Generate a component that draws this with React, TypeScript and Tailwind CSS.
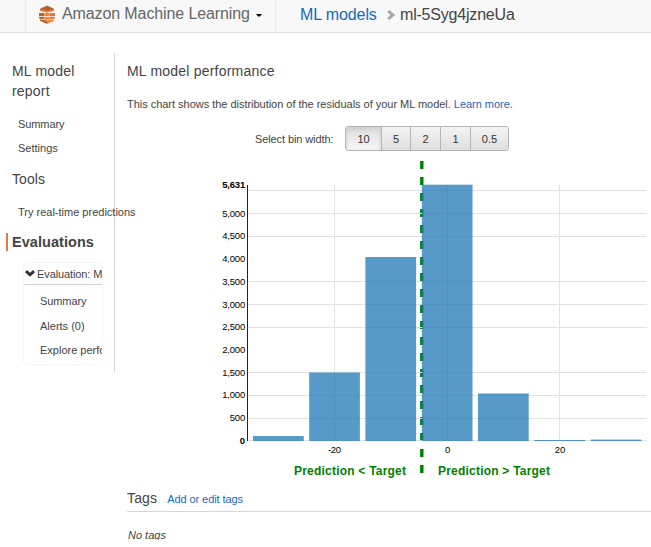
const FONT = "font-['Liberation_Sans',Arial,sans-serif]";

const bars = [
  { x: 253, y: 436 },
  { x: 309.2, y: 372.5 },
  { x: 365.4, y: 257 },
  { x: 421.8, y: 184.7 },
  { x: 478, y: 393.5 },
  { x: 534.4, y: 440 },
  { x: 590.8, y: 439.6 },
];
const gridRows = [190, 213, 236, 281, 304, 327, 372, 395, 418, 440];
const gridColumns = [334, 447, 559];
const yLabels = [
  { text: '5,631', y: 188, bold: true, width: 23 },
  { text: '5,000', y: 217, width: 23 },
  { text: '4,500', y: 239, width: 23 },
  { text: '4,000', y: 262, width: 23 },
  { text: '3,500', y: 285, width: 23 },
  { text: '3,000', y: 308, width: 23 },
  { text: '2,500', y: 330, width: 23 },
  { text: '2,000', y: 353, width: 23 },
  { text: '1,500', y: 376, width: 23 },
  { text: '1,000', y: 398, width: 23 },
  { text: '500', y: 421, width: 15.5 },
  { text: '0', y: 444, bold: true, width: 5.5 },
];
const xLabels = [
  { text: '-20', x: 334.5, width: 13 },
  { text: '0', x: 447.5, width: 5 },
  { text: '20', x: 560, width: 10.5 },
];
const bins = [
  { label: '10', width: 'w-[35px]' },
  { label: '5', width: 'w-[29px]' },
  { label: '2', width: 'w-[30px]' },
  { label: '1', width: 'w-[30px]' },
  { label: '0.5', width: 'w-[38px]' },
];

function Logo() {
  return (
    <svg width="16" height="19" viewBox="0 0 16 19" className="mt-[5px] shrink-0">
      <path d="M8 .5 15 3.800v2L8 7.200 1 5.800v-2z" fill="#b5622e" />
      <path d="M1 4.300 8 5.800v1.600L1 6zM15 4.300 8 5.800v1.600L15 6z" fill="#e58443" />
      <path d="M0 8h5v3H0zM0 11.800h5v2.400L0 13.500z" fill="#b5622e" />
      <path d="M11 8h5v3h-5zM11 11.800h5v1.700l-5 .7z" fill="#e07a38" />
      <path d="M5.300 8h5.400v3H5.300zM5.300 11.800h5.400v3H5.300z" fill="#f58536" />
      <path d="M1 14.300l7 1.300V19l-7-3.200z" fill="#b5622e" />
      <path d="M15 14.300l-7 1.300V19l7-3.200z" fill="#f58536" />
    </svg>
  );
}

function Header() {
  return (
    <header className="flex h-[33px] border-b border-[#dedede] bg-[#f8f8f8]">
      <div className="ml-[25px] flex w-[251px] border-x border-[#e9e9e9] pl-[13px]">
        <Logo />
        <span className="ml-[7px] mt-[4px] w-[188px] whitespace-nowrap text-[16px] leading-5 tracking-[-0.11px] text-[#666]">Amazon Machine Learning</span>
        <svg width="6" height="4" className="ml-[6px] mt-[14px] shrink-0"><path d="M0 0h6L4 2.500H2z" fill="#111" /></svg>
      </div>
      <nav className="ml-[24px] flex pt-[5px] text-[16px] leading-5 text-[#444]">
        <a className="w-[77px] whitespace-nowrap tracking-[-0.1px] text-[#146ac4]">ML models</a>
        <svg width="8" height="10" className="ml-[10px] mt-[5px]"><path d="M1.200 1 6 5 1.200 9" fill="none" stroke="#aaa" strokeWidth="3" /></svg>
        <span className="ml-[5px] tracking-[-0.2px]">ml-5Syg4jzneUa</span>
      </nav>
    </header>
  );
}

function Sidebar() {
  return (
    <aside className="mt-[20px] h-[319px] w-[115px] shrink-0 border-r border-[#d6d6d6] pl-[6px] text-[11px] leading-4">
      <h2 className="w-[80px] pl-[6px] pt-[8px] text-[14px] leading-5 tracking-[0.2px]">ML model report</h2>
      <p className="ml-[12px] mt-[15px] tracking-[-0.1px]">Summary</p>
      <p className="ml-[12px] mt-[8px]">Settings</p>
      <h2 className="ml-[6px] mt-[13px] text-[14px] leading-5 tracking-[0.1px]">Tools</h2>
      <p className="ml-[12px] mt-[15px] whitespace-nowrap">Try real-time predictions</p>
      <h2 className="mt-[13px] h-[18px] border-l-2 border-[#e47c45] pl-[4px] text-[14.500px] font-bold leading-[18px] tracking-[0.05px]">Evaluations</h2>
      <section className="ml-[18px] mt-[12px] h-[101px] w-[78px] overflow-hidden rounded-[3px] shadow-[0_0_2px_#ddd]">
        <div className="flex h-[22px] items-center whitespace-nowrap border-b border-[#d3d3d3] tracking-[-0.1px]">
          <svg width="10" height="7" className="ml-[1px] mr-[2px] shrink-0"><path d="M1 1.200 5 4.800 9 1.200" fill="none" stroke="#333" strokeWidth="3" /></svg>
          Evaluation: ML model
        </div>
        <div className="whitespace-nowrap pl-[16px]">
          <p className="mt-[8px] tracking-[-0.1px]">Summary</p>
          <p className="mt-[9px]">Alerts (0)</p>
          <p className="mt-[8px]">Explore performance</p>
        </div>
      </section>
    </aside>
  );
}

function Chart() {
  return (
    <svg width="524" height="325" viewBox="127 156 524 325" className="block font-['Liberation_Sans',Arial,sans-serif]">
      <path d="M421.800 161V473" stroke="#008000" strokeWidth="3.400" strokeDasharray="8 8" />
      <g fill="#e2e2e2">
        {gridColumns.map((x) => <rect key={x} x={x} y="185" width="1" height="256" />)}
        {gridRows.map((y) => <rect key={y} x="248" y={y} width="399" height="1" />)}
      </g>
      {bars.map((b) => <rect key={b.x} x={b.x} y={b.y} width="50.700" height={441 - b.y} fill="#1f77b4" fillOpacity=".75" />)}
      <path d="M247.500 185V441" stroke="#222" />
      <g fontSize="9.500" fill="#000">
        {yLabels.map((l) => <text key={l.text} x={245.2 - l.width} y={l.y} textLength={l.width} fontWeight={l.bold ? 700 : 400}>{l.text}</text>)}
        {xLabels.map((l) => <text key={l.text} x={l.x - l.width / 2} y="453" textLength={l.width}>{l.text}</text>)}
      </g>
      <g fontSize="12" fontWeight="700" fill="#008000">
        <text x="294" y="475" textLength="112">Prediction &lt; Target</text>
        <text x="438" y="475" textLength="112">Prediction &gt; Target</text>
      </g>
    </svg>
  );
}

export default function App() {
  return (
    <div className={`h-[547px] w-[651px] overflow-hidden bg-white text-[#444] ${FONT}`}>
      <Header />
      <div className="flex">
        <Sidebar />
        <main className="ml-[12px] w-[524px] shrink-0 text-[11px] leading-4">
          <h1 className="mt-[28px] text-[14px] leading-5 tracking-[0.21px]">ML model performance</h1>
          <p className="mt-[15px] whitespace-nowrap tracking-[-0.025px]">
            This chart shows the distribution of the residuals of your ML model. <a className="text-[#146ac4]">Learn more.</a>
          </p>
          <div className="ml-[128px] mt-[14px] flex h-[25px] items-center">
            <span className="w-[90px] whitespace-nowrap tracking-[-0.1px]">Select bin width:</span>
            <div className="flex h-[25px] overflow-hidden rounded-[3px] border border-[#b5b5b5] text-[#333]">
              {bins.map((b, i) => (
                <button key={b.label} className={`${b.width} ${i ? 'border-l border-[#b5b5b5] bg-linear-to-b from-[#f4f4f4] to-[#dedede]' : 'bg-linear-to-b from-[#dedede] to-[#f8f8f8] shadow-[inset_0_2px_4px_#ccc]'} flex items-center justify-center`}>
                  {b.label}
                </button>
              ))}
            </div>
          </div>
          <div className="mt-[5px]"><Chart /></div>
          <section className="h-[59px] overflow-hidden">
            <div className="flex h-[31px] items-center border-b border-[#d6d6d6] pt-[4px]">
              <h2 className="text-[14px] leading-5 tracking-[0.15px]">Tags</h2>
              <a className="ml-[10px] mt-[2px] tracking-[-0.08px] text-[#146ac4]">Add or edit tags</a>
            </div>
            <p className="ml-px mt-[15px] italic">No tags</p>
          </section>
        </main>
      </div>
    </div>
  );
}
